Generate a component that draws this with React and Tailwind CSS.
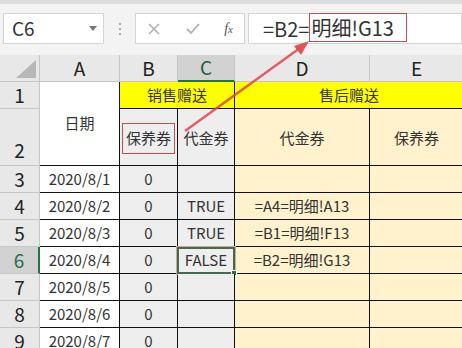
import React from "react";

const font = { fontFamily: '"Noto Sans CJK SC", "Noto Sans", sans-serif' };

const rows = [
  { n: "3", a: "2020/8/1", b: "0", c: "", d: "" },
  { n: "4", a: "2020/8/2", b: "0", c: "TRUE", d: "=A4=明细!A13" },
  { n: "5", a: "2020/8/3", b: "0", c: "TRUE", d: "=B1=明细!F13" },
  { n: "6", a: "2020/8/4", b: "0", c: "FALSE", d: "=B2=明细!G13", sel: true },
  { n: "7", a: "2020/8/5", b: "0", c: "", d: "" },
  { n: "8", a: "2020/8/6", b: "0", c: "", d: "" },
  { n: "9", a: "2020/8/7", b: "0", c: "", d: "" },
];

const rowHead = "flex items-center justify-center bg-[#e8e8e8] border-b border-r border-[#c6c6c6] text-[19px] text-[#222]";
const cell = "flex items-center justify-center border-b border-r border-[#111] text-[15px] text-[#333]";

const App = () => {
  return (
    <div className="relative w-[462px] h-[348px] overflow-hidden bg-[#f3f3f3]" style={font}>
      {/* formula bar */}
      <div className="h-[4px] bg-[#dcdcdc]" />
      <div className="flex items-center h-[51px] pb-[11px] pt-[9px]">
        <div className="ml-[3px] w-[101px] h-[31px] bg-white border border-[#d4d4d4] flex items-center justify-between pl-[8px] pr-[6px]">
          <span className="text-[19px] text-[#333]">C6</span>
          <span className="w-0 h-0 border-l-[4px] border-r-[4px] border-t-[5px] border-l-transparent border-r-transparent border-t-[#777]" />
        </div>
        <div className="w-[31px] flex flex-col items-center gap-[3px]">
          <span className="w-[2px] h-[2px] bg-[#aaa]" />
          <span className="w-[2px] h-[2px] bg-[#aaa]" />
          <span className="w-[2px] h-[2px] bg-[#aaa]" />
        </div>
        <div className="w-[110px] h-[31px] bg-white border border-[#d4d4d4] flex items-center justify-between px-[11px] text-[#aaa]">
          <svg width="14" height="14" viewBox="0 0 14 14">
            <path d="M2 2 L12 12 M12 2 L2 12" stroke="#b0b0b0" strokeWidth="1.6" fill="none" />
          </svg>
          <svg width="16" height="14" viewBox="0 0 16 14">
            <path d="M2 7 L6 11 L14 2" stroke="#b0b0b0" strokeWidth="1.8" fill="none" />
          </svg>
          <span className="text-[14px] italic text-[#555]" style={{ fontFamily: '"Liberation Serif", serif' }}>
            f<span className="text-[11px]">x</span>
          </span>
        </div>
        <div className="ml-[3px] flex-1 h-[31px] bg-white border border-[#d4d4d4] flex items-center pl-[14px] text-[20px] text-[#333]">
          <span>=B2=</span>
          <span className="border border-[#c0504d] h-[29px] -mt-[2px] flex items-center pl-[1px] pr-[12px]">明细!G13</span>
        </div>
      </div>

      {/* grid */}
      <div className="grid grid-cols-[40px_80px_58px_57px_135px_120px] grid-rows-[27px_27px_57px_27px_27px_27px_27px_27px_27px_27px]">
        {/* column headers */}
        <div className="bg-[#e8e8e8] border-b border-r border-[#c6c6c6] relative">
          <svg className="absolute right-[3px] bottom-[3px]" width="20" height="18" viewBox="0 0 20 18">
            <path d="M20 0 L20 18 L0 18 Z" fill="#b8b8b8" />
          </svg>
        </div>
        <div className="flex items-center justify-center bg-[#e8e8e8] border-b border-r border-[#c6c6c6] text-[19px] text-[#222]">A</div>
        <div className="flex items-center justify-center bg-[#e8e8e8] border-b border-r border-[#c6c6c6] text-[19px] text-[#222]">B</div>
        <div className="flex items-center justify-center bg-[#d2d2d2] border-b-2 border-r border-b-[#217346] border-r-[#c6c6c6] text-[19px] text-[#1e5a3a]">C</div>
        <div className="flex items-center justify-center bg-[#e8e8e8] border-b border-r border-[#c6c6c6] text-[19px] text-[#222]">D</div>
        <div className="flex items-center justify-center bg-[#e8e8e8] border-b border-r border-[#c6c6c6] text-[19px] text-[#222] pr-[26px]">E</div>

        {/* row 1 */}
        <div className={rowHead}>1</div>
        <div className={`${cell} row-span-2 bg-white`}>日期</div>
        <div className={`${cell} col-span-2 bg-[#ffff00]`}>销售赠送</div>
        <div className={`${cell} col-span-2 bg-[#ffff00] pr-[26px]`}>售后赠送</div>

        {/* row 2 */}
        <div className={`${rowHead} items-end pb-[1px]`}>2</div>
        <div className={`${cell} bg-[#eeeeee] pt-[3px]`}>
          <span className="border border-[#c0504d] px-[3px] py-[3px]">保养券</span>
        </div>
        <div className={`${cell} bg-[#eeeeee] pt-[3px]`}>代金券</div>
        <div className={`${cell} bg-[#fff2cc] pt-[3px]`}>代金券</div>
        <div className={`${cell} bg-[#fff2cc] pt-[3px] pr-[26px]`}>保养券</div>

        {rows.map((r) => (
          <React.Fragment key={r.n}>
            <div
              className={
                r.sel
                  ? "flex items-center justify-center bg-[#d2d2d2] border-b border-r-2 border-b-[#c6c6c6] border-r-[#217346] text-[19px] text-[#217346]"
                  : rowHead
              }
            >
              {r.n}
            </div>
            <div className={`${cell} bg-white`}>{r.a}</div>
            <div className={`${cell} bg-[#eeeeee]`}>{r.b}</div>
            <div className={`${cell} bg-[#eeeeee] relative`}>
              {r.c}
              {r.sel && (
                <div className="absolute -left-[2px] -top-[1px] w-[60px] h-[29px] border border-[#d9a08a]">
                  <div className="w-full h-full border-2 border-[#3f6b4e]" />
                  <div className="absolute -right-[2px] -bottom-[2px] w-[6px] h-[6px] bg-[#217346] border border-white" />
                </div>
              )}
            </div>
            <div className={`${cell} bg-[#fff2cc]`}>{r.d}</div>
            <div className={`${cell} bg-[#fff2cc]`} />
          </React.Fragment>
        ))}
      </div>

      {/* arrow from C2 to the formula */}
      <svg className="absolute left-0 top-0 pointer-events-none" width="462" height="348" viewBox="0 0 462 348">
        <line x1="185" y1="131" x2="300" y2="48" stroke="#e0444c" strokeOpacity="0.85" strokeWidth="2.5" />
        <path d="M309 41 L294 46 L301 55 Z" fill="#e0444c" fillOpacity="0.9" />
      </svg>
    </div>
  );
};

export default App;
